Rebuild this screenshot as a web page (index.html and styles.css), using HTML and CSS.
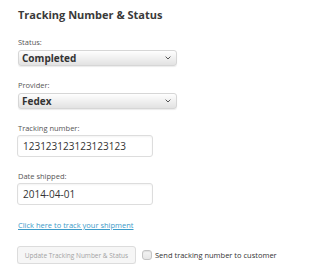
FILE: index.html
```html
<!DOCTYPE html>
<html>
<head>
<meta charset="utf-8">
<link rel="stylesheet" href="styles.css">
</head>
<body>
<div class="box">
  <h3 class="title">Tracking Number &amp; Status</h3>
  <div class="field">
    <label class="lbl">Status:</label>
    <span class="selwrap">
      <select class="sel"><option>Completed</option></select>
      <svg class="chev" width="6" height="4" viewBox="0 0 6 4"><path d="M0.6 0.6 L3 3 L5.4 0.6" fill="none" stroke="#555" stroke-width="1"/></svg>
    </span>
  </div>
  <div class="field">
    <label class="lbl">Provider:</label>
    <span class="selwrap">
      <select class="sel"><option>Fedex</option></select>
      <svg class="chev" width="6" height="4" viewBox="0 0 6 4"><path d="M0.6 0.6 L3 3 L5.4 0.6" fill="none" stroke="#555" stroke-width="1"/></svg>
    </span>
  </div>
  <div class="field">
    <label class="lbl lbl-in">Tracking number:</label>
    <input class="inp" type="text" value="123123123123123123">
  </div>
  <div class="field">
    <label class="lbl lbl-in">Date shipped:</label>
    <input class="inp" type="text" value="2014-04-01">
  </div>
  <a class="link" href="#">Click here to track your shipment</a>
  <div class="actions">
    <button class="btn" disabled>Update Tracking Number &amp; Status</button>
    <label class="chk"><input class="cb" type="checkbox"><span>Send tracking number to customer</span></label>
  </div>
</div>
</body>
</html>
```
FILE: styles.css
```css
html, body {
  margin: 0;
  padding: 0;
  background: #fff;
}
body {
  font-family: "Open Sans", "DejaVu Sans", sans-serif;
  color: #444;
}
.box {
  padding: 8px 0 0 18px;
  display: flex;
  flex-direction: column;
  align-items: flex-start;
}
.title {
  margin: 0 0 15px 0;
  font-size: 11px;
  line-height: 14px;
  font-weight: 700;
  color: #3a3a3a;
}
.field {
  display: flex;
  flex-direction: column;
  align-items: flex-start;
  margin-bottom: 14px;
}
.lbl {
  font-size: 7.5px;
  line-height: 10px;
  color: #555;
  margin-bottom: 3px;
}
.lbl-in {
  margin-bottom: 2px;
}
.selwrap {
  position: relative;
  display: flex;
}
.sel {
  appearance: none;
  -webkit-appearance: none;
  display: block;
  width: 159px;
  height: 16px;
  margin: 0;
  padding: 0 0 0 3px;
  border: 1px solid #d6d6d6;
  border-radius: 3px;
  background: linear-gradient(#fefefe, #e2e2e2);
  box-shadow: 0 1px 1px rgba(0,0,0,0.08);
  font-family: "Open Sans", sans-serif;
  font-size: 10px;
  font-weight: 700;
  color: #333;
  line-height: 14px;
}
.chev {
  position: absolute;
  right: 6px;
  top: 6px;
}
.inp {
  display: block;
  width: 136px;
  height: 22px;
  box-sizing: border-box;
  margin: 0 0 0 -1px;
  padding: 0 0 0 5px;
  border: 1px solid #ddd;
  border-radius: 3px;
  box-shadow: inset 0 1px 2px rgba(0,0,0,0.05);
  font-family: "Open Sans", sans-serif;
  font-size: 10px;
  color: #333;
  background: #fff;
}
.link {
  font-size: 7.5px;
  line-height: 10px;
  color: #3d9bc9;
  text-decoration: underline;
  margin-top: 1px;
}
.actions {
  display: flex;
  align-items: center;
  margin-top: 16px;
  margin-left: -1px;
}
.btn {
  width: 119px;
  height: 18px;
  margin: 0;
  padding: 0;
  border: 1px solid #dcdcdc;
  border-radius: 3px;
  background: #f6f6f6;
  color: #a3a3a3;
  font-family: "Open Sans", sans-serif;
  font-size: 6.5px;
  box-shadow: 0 1px 0 rgba(0,0,0,0.04);
}
.chk {
  display: flex;
  align-items: center;
  margin-left: 6px;
  font-size: 7.5px;
  color: #333;
}
.cb {
  appearance: none;
  -webkit-appearance: none;
  width: 10px;
  height: 10px;
  margin: 0 3px 0 0;
  border: 1px solid #c4c4c4;
  border-radius: 3px;
  background: linear-gradient(#f4f4f4, #e6e6e6);
  box-shadow: inset 0 1px 1px rgba(0,0,0,0.08);
}
```
